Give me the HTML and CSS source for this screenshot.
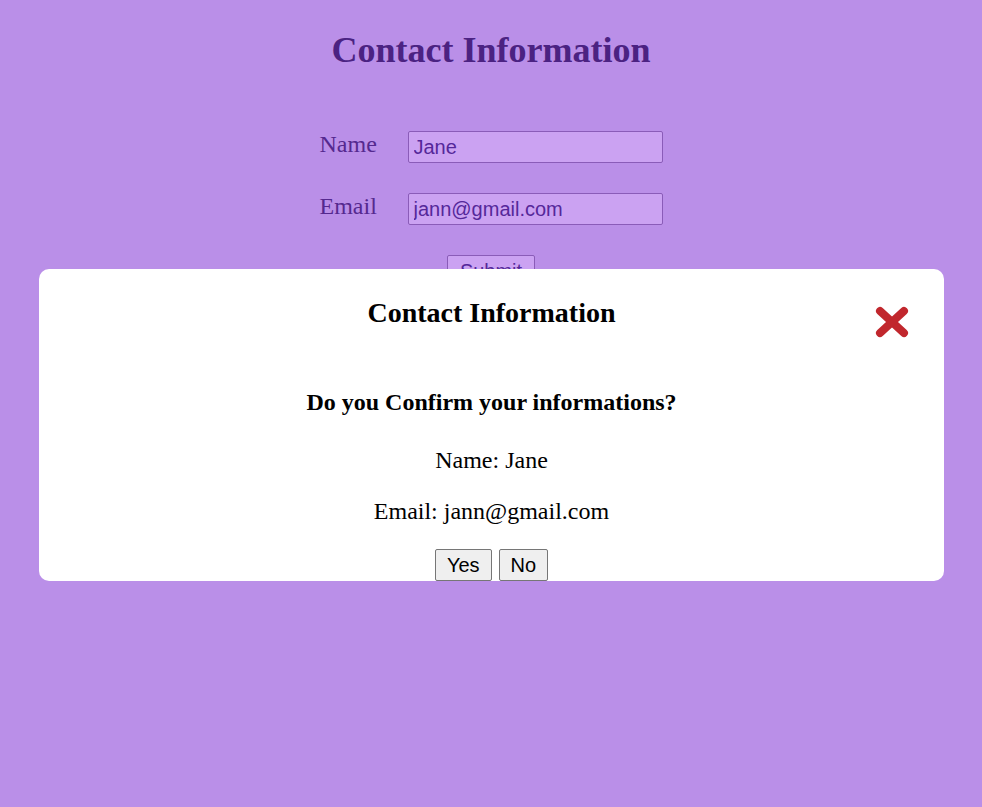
FILE: index.html
```html
<!DOCTYPE html>
<html lang="en">
<head>
<meta charset="utf-8">
<title>Contact Information</title>
<link rel="stylesheet" href="styles.css">
</head>
<body>
<main class="page">
  <h1 class="page-title">Contact Information</h1>
  <form class="contact-form">
    <div class="form-row">
      <label class="form-label" for="name">Name</label>
      <input class="form-input" id="name" type="text" value="Jane">
    </div>
    <div class="form-row">
      <label class="form-label" for="email">Email</label>
      <input class="form-input" id="email" type="text" value="jann@gmail.com">
    </div>
    <div class="form-actions">
      <button class="submit-btn" type="button">Submit</button>
    </div>
  </form>
</main>

<div class="modal">
  <h2 class="modal-title">Contact Information</h2>
  <button class="modal-close" type="button" aria-label="Close">
    <svg width="34" height="32" viewBox="0 0 34 32">
      <line x1="5" y1="5" x2="29" y2="27" stroke="#c1272d" stroke-width="8" stroke-linecap="round"/>
      <line x1="29" y1="5" x2="5" y2="27" stroke="#c1272d" stroke-width="8" stroke-linecap="round"/>
    </svg>
  </button>
  <h3 class="modal-question">Do you Confirm your informations?</h3>
  <p class="modal-line modal-name">Name: Jane</p>
  <p class="modal-line modal-email">Email: jann@gmail.com</p>
  <div class="modal-actions">
    <button class="modal-btn" type="button">Yes</button>
    <button class="modal-btn" type="button">No</button>
  </div>
</div>
</body>
</html>
```

FILE: styles.css
```css
html, body {
  margin: 0;
  padding: 0;
}

body {
  background: #ba8fe8;
  font-family: "Liberation Serif", "Times New Roman", serif;
  min-height: 807px;
}

.page {
  padding-top: 32px;
  display: flex;
  flex-direction: column;
  align-items: center;
}

.page-title {
  margin: 0;
  font-size: 36px;
  line-height: 36px;
  font-weight: bold;
  color: #4b2282;
  text-align: center;
}

.contact-form {
  margin-top: 63px;
  display: flex;
  flex-direction: column;
  align-items: center;
  gap: 30px;
}

.form-row {
  display: flex;
  align-items: flex-start;
  gap: 31px;
  height: 32px;
}

.form-label {
  width: 57px;
  padding-top: 1px;
  font-size: 24px;
  line-height: 24px;
  color: #55298f;
  white-space: nowrap;
}

.form-input {
  box-sizing: border-box;
  width: 255px;
  height: 32px;
  margin: 0;
  padding: 0 5px;
  border: 1px solid #8a5cb8;
  border-radius: 2px;
  background: #cba2f2;
  color: #55289a;
  font-family: "Liberation Sans", Arial, sans-serif;
  font-size: 20px;
  outline: none;
}

.form-actions {
  display: flex;
  justify-content: center;
}

.submit-btn {
  box-sizing: border-box;
  height: 32px;
  margin: 0;
  padding: 0 11.5px;
  border: 1px solid #8a5cb8;
  border-radius: 2px;
  background: #cba2f2;
  color: #55289a;
  font-family: "Liberation Sans", Arial, sans-serif;
  font-size: 20px;
  line-height: 30px;
}

.modal {
  position: absolute;
  left: 39px;
  top: 269px;
  width: 905px;
  height: 312px;
  box-sizing: border-box;
  padding-top: 30px;
  background: #ffffff;
  border-radius: 10px;
  display: flex;
  flex-direction: column;
  align-items: center;
  color: #000000;
  text-align: center;
}

.modal-title {
  margin: 0;
  font-size: 28px;
  line-height: 28px;
  font-weight: bold;
}

.modal-close {
  position: absolute;
  top: 37px;
  right: 35px;
  width: 34px;
  height: 32px;
  padding: 0;
  margin: 0;
  border: 0;
  background: none;
  display: flex;
}

.modal-question {
  margin: 63px 0 0;
  font-size: 24px;
  line-height: 24px;
  font-weight: bold;
}

.modal-line {
  margin: 0;
  font-size: 24px;
  line-height: 24px;
}

.modal-name {
  margin-top: 34px;
}

.modal-email {
  margin-top: 27px;
}

.modal-actions {
  margin-top: 26px;
  display: flex;
  gap: 7px;
}

.modal-btn {
  box-sizing: border-box;
  height: 32px;
  margin: 0;
  padding: 0 11px;
  border: 1px solid #767676;
  border-radius: 2px;
  background: #efefef;
  color: #000000;
  font-family: "Liberation Sans", Arial, sans-serif;
  font-size: 20px;
  line-height: 30px;
}
```
